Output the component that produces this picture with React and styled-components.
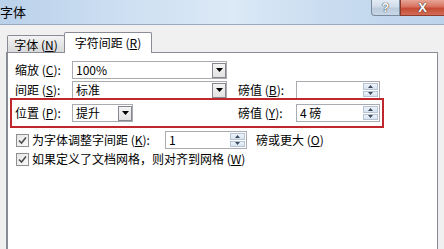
import React from "react";
import styled, { createGlobalStyle } from "styled-components";

const GlobalStyle = createGlobalStyle`
  html, body {
    margin: 0;
    padding: 0;
    background: #f0f0f0;
  }
  body {
    font-family: "Noto Sans CJK SC", "Liberation Sans", sans-serif;
    font-size: 12px;
    color: #000;
  }
`;

const Window = styled.div`
  width: 444px;
  height: 249px;
  overflow: hidden;
  background: #f0f0f0;
  display: flex;
  flex-direction: column;
`;

const TitleBar = styled.div`
  flex: none;
  height: 24px;
  display: flex;
  align-items: flex-start;
  background: linear-gradient(
    90deg,
    #bad1ea 0%,
    #cddff2 28%,
    #dce9f6 52%,
    #c9dcf0 74%,
    #bcd3ec 100%
  );
  border-bottom: 1px solid #9aabc0;
`;

const Title = styled.span`
  font-size: 13px;
  line-height: 13px;
  margin: 5px 0 0 0;
`;

const Caption = styled.div`
  margin-left: auto;
  display: flex;
`;

const CaptionButton = styled.div`
  width: ${(p) => p.$w}px;
  height: 16px;
  box-sizing: border-box;
  display: flex;
  align-items: center;
  justify-content: center;
  font-family: "Liberation Sans", sans-serif;
  font-weight: bold;
  font-size: ${(p) => (p.$close ? 13 : 12)}px;
  color: #fff;
  text-shadow: 0 0 1px #333, 0 0 1px #333;
  border: 1px solid ${(p) => (p.$close ? "#8e3a2c" : "#7a8ba0")};
  border-top: none;
  border-right: ${(p) => (p.$close ? "none" : "1px solid #7a8ba0")};
  border-bottom-left-radius: ${(p) => (p.$close ? 0 : 4)}px;
  background: ${(p) =>
    p.$close
      ? "linear-gradient(180deg, #e8a597 0%, #d7735f 45%, #c54a34 55%, #d46e58 100%)"
      : "linear-gradient(180deg, #e3ebf4 0%, #d0dcea 45%, #bccbdd 55%, #c9d6e5 100%)"};
`;

const Body = styled.div`
  flex: 1;
  display: flex;
  flex-direction: column;
  padding: 7px 6px 0 6px;
`;

const TabStrip = styled.div`
  flex: none;
  height: 20px;
  display: flex;
  align-items: flex-end;
  padding-left: 1px;
`;

const Tab = styled.div`
  box-sizing: border-box;
  width: ${(p) => p.$w}px;
  height: ${(p) => (p.$active ? 21 : 17)}px;
  margin-bottom: ${(p) => (p.$active ? -1 : 0)}px;
  margin-right: ${(p) => (p.$active ? 0 : -1)}px;
  position: relative;
  z-index: ${(p) => (p.$active ? 2 : 1)};
  border: 1px solid #898c95;
  border-bottom: none;
  border-radius: 2px 2px 0 0;
  background: ${(p) =>
    p.$active ? "#fff" : "linear-gradient(180deg, #f3f3f3 0%, #e6e6e6 50%, #d9d9d9 100%)"};
  display: flex;
  align-items: center;
  justify-content: center;
  font-size: 12px;
  line-height: 14px;
  padding-top: ${(p) => (p.$active ? 0 : 1)}px;
`;

const Key = styled.span`
  text-decoration: underline;
  text-underline-offset: 1px;
`;

const Panel = styled.div`
  flex: 1;
  background: #fff;
  border: 1px solid #898c95;
  border-left-width: 2px;
  border-bottom: none;
  padding-top: 8px;
  display: flex;
  flex-direction: column;
`;

const Row = styled.div`
  height: 18px;
  display: flex;
  align-items: center;
  padding-left: ${(p) => p.$pad ?? 7}px;
  margin-top: ${(p) => p.$top ?? 2}px;
`;

const HighlightRow = styled.div`
  box-sizing: border-box;
  width: 374px;
  height: 30px;
  margin: -1px 0 0 2px;
  border: 2px solid #c0272d;
  padding-left: 3px;
  display: flex;
  align-items: center;
  position: relative;
  z-index: 1;
`;

const Label = styled.span`
  flex: none;
  width: ${(p) => p.$w}px;
  margin-left: ${(p) => p.$ml ?? 0}px;
  white-space: nowrap;
  line-height: 14px;
`;

const FieldCell = styled.div`
  flex: none;
  width: 155px;
  display: flex;
`;

const Combo = styled.div`
  box-sizing: border-box;
  width: ${(p) => p.$w}px;
  height: 18px;
  border: 1px solid #a9abb0;
  background: #fff;
  display: flex;
  align-items: center;
  padding-left: 3px;
  line-height: 14px;
`;

const Value = styled.span`
  flex: 1;
  white-space: pre;
`;

const DropButton = styled.div`
  box-sizing: border-box;
  width: 14px;
  height: 15px;
  margin-right: 0;
  border: 1px solid #85888e;
  background: linear-gradient(180deg, #f4f4f4 0%, #e2e2e2 100%);
  display: flex;
  align-items: center;
  justify-content: center;
`;

const Spin = styled.div`
  box-sizing: border-box;
  width: ${(p) => p.$w}px;
  height: 18px;
  border: 1px solid #a9abb0;
  background: #fff;
  display: flex;
  align-items: center;
  padding: 0 1px 0 3px;
  line-height: 14px;
`;

const SpinButtons = styled.div`
  width: 15px;
  height: 14px;
  display: flex;
  flex-direction: column;
  gap: 1px;
`;

const SpinHalf = styled.div`
  flex: 1;
  border: 1px solid #b7c3d2;
  background: linear-gradient(180deg, #eef3f9 0%, #d7e3f1 100%);
  display: flex;
  align-items: center;
  justify-content: center;
`;

const Check = styled.div`
  box-sizing: border-box;
  width: 13px;
  height: 13px;
  flex: none;
  margin-right: 3px;
  border: 1px solid #8f8f8f;
  background: linear-gradient(135deg, #e6e6e6 0%, #fafafa 100%);
  display: flex;
  align-items: center;
  justify-content: center;
`;

const Text = styled.span`
  white-space: nowrap;
  line-height: 14px;
  margin-left: ${(p) => p.$ml ?? 0}px;
`;

const Arrow = ({ up }) => (
  <svg width="7" height="4" viewBox="0 0 7 4">
    <path d={up ? "M0 4 L3.5 0 L7 4 Z" : "M0 0 L7 0 L3.5 4 Z"} fill="#000" />
  </svg>
);

const SmallArrow = ({ up }) => (
  <svg width="5" height="3" viewBox="0 0 5 3">
    <path d={up ? "M0 3 L2.5 0 L5 3 Z" : "M0 0 L5 0 L2.5 3 Z"} fill="#3b4a5c" />
  </svg>
);

const ComboBox = ({ width, value }) => (
  <Combo $w={width}>
    <Value>{value}</Value>
    <DropButton>
      <Arrow />
    </DropButton>
  </Combo>
);

const SpinBox = ({ width, value }) => (
  <Spin $w={width}>
    <Value>{value}</Value>
    <SpinButtons>
      <SpinHalf>
        <SmallArrow up />
      </SpinHalf>
      <SpinHalf>
        <SmallArrow />
      </SpinHalf>
    </SpinButtons>
  </Spin>
);

const CheckBox = () => (
  <Check>
    <svg width="9" height="9" viewBox="0 0 9 9">
      <path d="M1 4.5 L3.5 7 L8 1.5" stroke="#4d4d4d" strokeWidth="1.6" fill="none" />
    </svg>
  </Check>
);

const Accel = ({ k }) => (
  <>
    (<Key>{k}</Key>)
  </>
);

export default function App() {
  return (
    <>
      <GlobalStyle />
      <Window>
        <TitleBar>
          <Title>字体</Title>
          <Caption>
            <CaptionButton $w={29}>?</CaptionButton>
            <CaptionButton $w={44} $close>
              X
            </CaptionButton>
          </Caption>
        </TitleBar>
        <Body>
          <TabStrip>
            <Tab $w={58}>
              字体 <Accel k="N" />
            </Tab>
            <Tab $w={88} $active>
              字符间距 <Accel k="R" />
            </Tab>
          </TabStrip>
          <Panel>
            <Row $top={0}>
              <Label $w={57}>
                缩放 <Accel k="C" />:
              </Label>
              <FieldCell>
                <ComboBox width={155} value="100%" />
              </FieldCell>
            </Row>
            <Row>
              <Label $w={57}>
                间距 <Accel k="S" />:
              </Label>
              <FieldCell>
                <ComboBox width={155} value="标准" />
              </FieldCell>
              <Label $w={58} $ml={11}>
                磅值 <Accel k="B" />:
              </Label>
              <SpinBox width={84} value="" />
            </Row>
            <HighlightRow>
              <Label $w={57}>
                位置 <Accel k="P" />:
              </Label>
              <FieldCell>
                <ComboBox width={61} value="提升" />
              </FieldCell>
              <Label $w={58} $ml={11}>
                磅值 <Accel k="Y" />:
              </Label>
              <SpinBox width={84} value="4 磅" />
            </HighlightRow>
            <Row $top={3} $pad={8}>
              <CheckBox />
              <Label $w={133}>
                为字体调整字间距 <Accel k="K" />:
              </Label>
              <SpinBox width={82} value="1" />
              <Text $ml={9}>
                磅或更大 <Accel k="O" />
              </Text>
            </Row>
            <Row $top={1} $pad={8}>
              <CheckBox />
              <Text>
                如果定义了文档网格，则对齐到网格 <Accel k="W" />
              </Text>
            </Row>
          </Panel>
        </Body>
      </Window>
    </>
  );
}
